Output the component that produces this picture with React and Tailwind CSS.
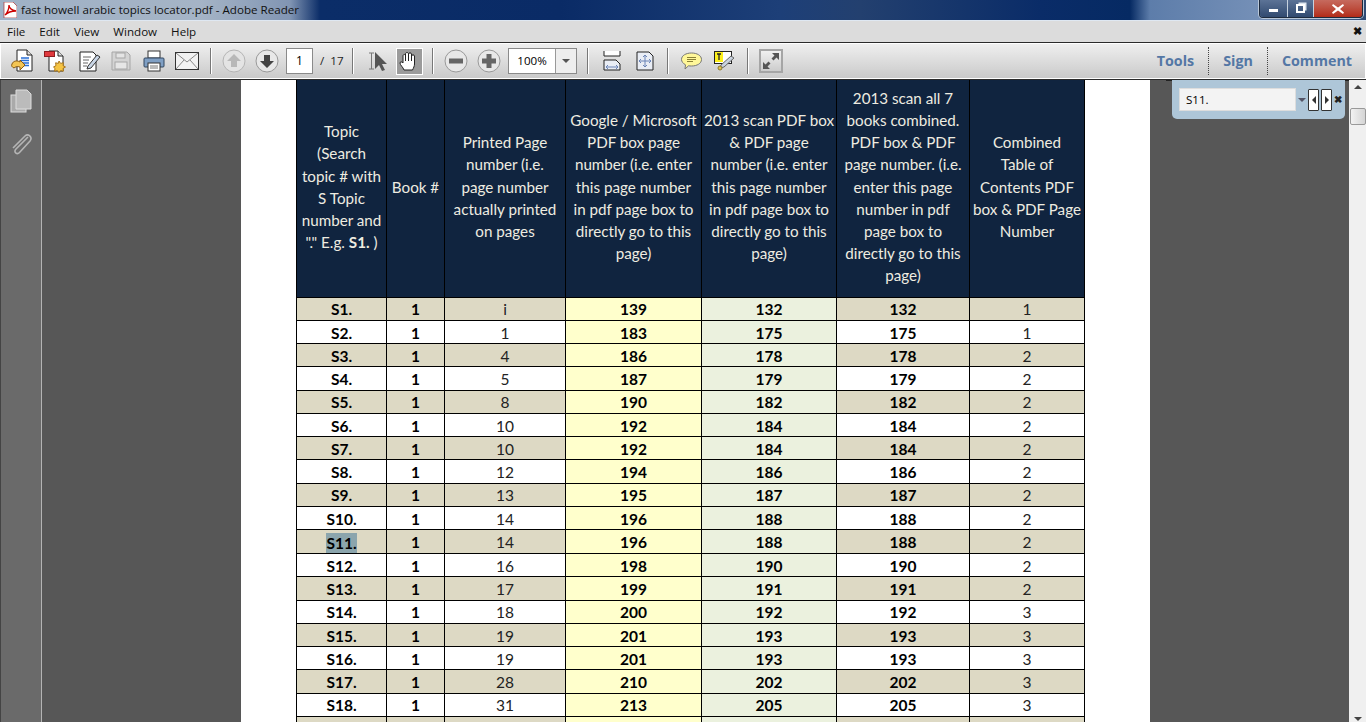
import React from 'react'

// Table content
const rows = [
  ['S1.', '1', 'i', '139', '132', '132', '1'],
  ['S2.', '1', '1', '183', '175', '175', '1'],
  ['S3.', '1', '4', '186', '178', '178', '2'],
  ['S4.', '1', '5', '187', '179', '179', '2'],
  ['S5.', '1', '8', '190', '182', '182', '2'],
  ['S6.', '1', '10', '192', '184', '184', '2'],
  ['S7.', '1', '10', '192', '184', '184', '2'],
  ['S8.', '1', '12', '194', '186', '186', '2'],
  ['S9.', '1', '13', '195', '187', '187', '2'],
  ['S10.', '1', '14', '196', '188', '188', '2'],
  ['S11.', '1', '14', '196', '188', '188', '2'],
  ['S12.', '1', '16', '198', '190', '190', '2'],
  ['S13.', '1', '17', '199', '191', '191', '2'],
  ['S14.', '1', '18', '200', '192', '192', '3'],
  ['S15.', '1', '19', '201', '193', '193', '3'],
  ['S16.', '1', '19', '201', '193', '193', '3'],
  ['S17.', '1', '28', '210', '202', '202', '3'],
  ['S18.', '1', '31', '213', '205', '205', '3'],
  ['', '', '', '', '', '', ''],
]

const headers = [
  <>Topic<br />(Search<br />topic # with<br />S Topic<br />number and<br />"." E.g. <b>S1.</b> )</>,
  <>Book #</>,
  <>Printed Page<br />number (i.e.<br />page number<br />actually printed<br />on pages</>,
  <>Google / Microsoft<br />PDF box page<br />number (i.e. enter<br />this page number<br />in pdf page box to<br />directly go to this<br />page)</>,
  <>2013 scan PDF box<br />&amp; PDF page<br />number (i.e. enter<br />this page number<br />in pdf page box to<br />directly go to this<br />page)</>,
  <>2013 scan all 7<br />books combined.<br />PDF box &amp; PDF<br />page number. (i.e.<br />enter this page<br />number in pdf<br />page box to<br />directly go to this<br />page)</>,
  <>Combined<br />Table of<br />Contents PDF<br />box &amp; PDF Page<br />Number</>,
]

const widths = ['w-[90px]', 'w-[58px]', 'w-[121px]', 'w-[136px]', 'w-[135px]', 'w-[133px]', 'w-[115px]']

function Sep() {
  return <div className="w-[1px] h-[26px] bg-[#777] border-r border-white box-content" />
}

function Toolbar() {
  return (
    <div className="h-[38px] flex items-center border-y border-[#2b2b2b] bg-gradient-to-b from-[#f0f0f0] to-[#c9c9c9] shadow-[inset_0_0_0_1px_#fff] text-black">
      <div className="flex items-center ml-[11px] gap-[11px]">
        {/* create pdf */}
        <svg width="22" height="24" viewBox="0 0 22 24">
          <path d="M6 1h10l5 5v16H6z" fill="#fff" stroke="#222" />
          <path d="M16 1v5h5" fill="#ddd" stroke="#222" />
          <path d="M10 9h8M10 11.5h8M10 14h8M12 16.5h6" stroke="#2a6fd6" strokeWidth="1.3" />
          <path d="M1 15c1-3 5-4 8-2v-2l5 5-5 5v-3c-3-1-5 0-6 1-2-1-3-2-2-4z" fill="#f3c553" stroke="#8a5a12" />
        </svg>
        <svg width="22" height="24" viewBox="0 0 22 24">
          <path d="M5 2h9l5 5v15H5z" fill="#fff" stroke="#222" />
          <path d="M14 2v5h5" fill="#ddd" stroke="#222" />
          <rect x="0.5" y="2.5" width="10" height="5" fill="#e0393e" stroke="#8d1d20" />
          <path d="M15 12l1.600 2.400 2.800-.6-.4 2.800 2.500 1.400-2.500 1.400.4 2.800-2.800-.6-1.600 2-1.600-2-2.800.6.4-2.800L9.500 18l2.500-1.400-.4-2.800 2.800.6z" fill="#f5c443" stroke="#a9761c" />
        </svg>
        <svg width="22" height="22" viewBox="0 0 22 22" className="ml-[2px]">
          <path d="M1 2h13l3 3v16H1z" fill="#fff" stroke="#222" />
          <path d="M4 7h8M4 10h6M4 13h5M4 16h4" stroke="#666" />
          <path d="M9 16l9-11 3 2-9 11-4 1z" fill="#c9d6e6" stroke="#333" />
        </svg>
        <svg width="20" height="20" viewBox="0 0 20 20" className="-ml-[1px]">
          <path d="M1 1h15l3 3v15H1z" fill="#d4d4d4" stroke="#a6a6a6" />
          <rect x="5" y="2" width="9" height="5" fill="#e4e4e4" stroke="#a6a6a6" />
          <rect x="4" y="11" width="12" height="7" fill="#e6e6e6" stroke="#a6a6a6" />
        </svg>
        <svg width="22" height="22" viewBox="0 0 22 22" className="ml-[1px]">
          <rect x="5" y="1" width="12" height="7" fill="#fff" stroke="#333" />
          <path d="M2 8h18a1 1 0 0 1 1 1v7a1 1 0 0 1-1 1H2a1 1 0 0 1-1-1V9a1 1 0 0 1 1-1z" fill="#7f9fc4" stroke="#32465f" />
          <rect x="5" y="13" width="12" height="8" fill="#fff" stroke="#333" />
          <path d="M7 16h8M7 18h8" stroke="#777" />
        </svg>
        <svg width="24" height="18" viewBox="0 0 24 18" className="-ml-[1px]">
          <rect x="0.500" y="0.500" width="23" height="17" fill="#f2f2f2" stroke="#333" />
          <path d="M1 1l11 9 11-9M1 17l8-9M23 17l-8-9" fill="none" stroke="#888" />
        </svg>
      </div>
      <div className="ml-[11px]"><Sep /></div>
      <svg width="24" height="24" viewBox="0 0 24 24" className="ml-[10px]">
        <circle cx="12" cy="12" r="11" fill="#e4e4e4" stroke="#b5b5b5" />
        <path d="M12 5l7 7h-4v6H9v-6H5z" fill="#b8b8b8" />
      </svg>
      <svg width="24" height="24" viewBox="0 0 24 24" className="ml-[9px]">
        <circle cx="12" cy="12" r="11" fill="#e8e8e8" stroke="#999" />
        <path d="M12 19l-7-7h4V6h6v6h4z" fill="#444" />
      </svg>
      <div className="ml-[7px] w-[27px] h-[26px] bg-white border border-[#8a8a8a] flex items-center justify-center text-[12px]">1</div>
      <div className="ml-[7px] w-[24px] text-[11.600px] whitespace-nowrap text-[#222]">/&nbsp; 17</div>
      <div className="ml-[8px]"><Sep /></div>
      <svg width="20" height="20" viewBox="0 0 20 20" className="ml-[14px]">
        <path d="M1 2h5M1 18h5M3.500 2v16" stroke="#777" fill="none" />
        <path d="M7 1l12 12h-5l3 6-3 1-3-6-4 4z" fill="#555" />
      </svg>
      <div className="ml-[8px] w-[27px] h-[27px] bg-[#9b9b9b] border border-white flex items-center justify-center">
        <svg width="21" height="21" viewBox="0 0 21 21">
          <path d="M5 19c-1-3-4-5-4-7 0-1.500 2-1.500 3 0V5c0-2 2.500-2 2.500 0V3c0-2 3-2 3 0v0c0-1.500 3-1.500 3 0v2c0-1.500 3-1.500 3 0v8c0 2-1 4-2 6z" fill="#fff" stroke="#222" />
          <path d="M6.500 5v5M9.500 3v7M12.500 4v6" stroke="#222" />
        </svg>
      </div>
      <div className="ml-[9px]"><Sep /></div>
      <svg width="24" height="24" viewBox="0 0 24 24" className="ml-[10px]">
        <circle cx="12" cy="12" r="11" fill="#e8e8e8" stroke="#999" />
        <rect x="5" y="9.500" width="14" height="5" fill="#666" />
      </svg>
      <svg width="24" height="24" viewBox="0 0 24 24" className="ml-[9px]">
        <circle cx="12" cy="12" r="11" fill="#e8e8e8" stroke="#999" />
        <path d="M9.500 5h5v4.500H19v5h-4.500V19h-5v-4.500H5v-5h4.500z" fill="#666" />
      </svg>
      <div className="ml-[7px] w-[69px] h-[26px] bg-white border border-[#8a8a8a] flex">
        <div className="w-[46px] flex items-center justify-center text-[11.600px]">100%</div>
        <div className="flex-1 border-l border-[#999] bg-[#eee] flex items-center justify-center">
          <div className="w-0 h-0 border-x-[4px] border-x-transparent border-t-[4px] border-t-[#555]" />
        </div>
      </div>
      <div className="ml-[10px]"><Sep /></div>
      <svg width="18" height="20" viewBox="0 0 18 20" className="ml-[14px]">
        <path d="M1 0v5h16V0" fill="#fff" stroke="#222" />
        <path d="M1 19V9h12l4 4v6z" fill="#e9edf5" stroke="#222" />
        <path d="M3 16h12M3 16l2-2M3 16l2 2M15 16l-2-2M15 16l-2 2" stroke="#6a84b8" fill="none" />
      </svg>
      <svg width="18" height="20" viewBox="0 0 18 20" className="ml-[15px]">
        <path d="M1 1h12l4 4v14H1z" fill="#e9edf5" stroke="#222" />
        <path d="M3 10h12M9 4v12M3 10l2-2M3 10l2 2M15 10l-2-2M15 10l-2 2M9 4l-2 2M9 4l2 2M9 16l-2-2M9 16l2-2" stroke="#6a84b8" fill="none" />
      </svg>
      <div className="ml-[13px]"><Sep /></div>
      <svg width="21" height="18" viewBox="0 0 21 18" className="ml-[12px]">
        <path d="M10.500 1c5.500 0 10 2.500 10 6.500S16 14 10.500 14c-1 0-2 0-3-.2L4 17l.5-4.200C2 11.500.5 9.500.5 7.500.5 3.500 5 1 10.500 1z" fill="#fff799" stroke="#777" />
        <path d="M6 5.500h9M6 7.500h9M6 9.500h6" stroke="#8a8138" />
      </svg>
      <svg width="21" height="20" viewBox="0 0 21 20" className="ml-[12px]">
        <rect x="0.500" y="0.500" width="17" height="12" fill="#fff" stroke="#222" />
        <rect x="1" y="1" width="8" height="10" fill="#fdf01c" />
        <path d="M3 3h4M5 3v6" stroke="#222" strokeWidth="1.300" />
        <path d="M6 17l1-3 10-9 3 2-10 9z" fill="#c9d3df" stroke="#666" />
        <circle cx="6" cy="17" r="2" fill="#e0c050" stroke="#8a7a30" />
      </svg>
      <div className="ml-[12px]"><Sep /></div>
      <div className="ml-[10px] w-[24px] h-[24px] border-2 border-[#a5a5a5] bg-gradient-to-b from-[#f0f0f0] to-[#ccc] flex items-center justify-center">
        <svg width="18" height="18" viewBox="0 0 18 18">
          <path d="M10 1h7v7l-2.500-2.500-3 3-2-2 3-3zM8 17H1v-7l2.500 2.500 3-3 2 2-3 3z" fill="#555" />
        </svg>
      </div>
      {/* right side panels */}
      <div className="ml-auto flex items-center h-full text-[14.300px] font-bold text-[#5477a5]">
        <span>Tools</span>
        <div className="h-[28px] ml-[14px] mr-[14px] border-l border-dotted border-[#444]" />
        <span>Sign</span>
        <div className="h-[28px] ml-[14px] mr-[14px] border-l border-dotted border-[#444]" />
        <span className="mr-[14px]">Comment</span>
      </div>
    </div>
  )
}

function App() {
  return (
    <div className="w-[1366px] h-[722px] overflow-hidden flex flex-col bg-[#dcdcdc] font-['Open_Sans',sans-serif]">
      {/* window title bar */}
      <div className="h-[21px] flex items-start justify-between border-b border-[#dfe8f2] bg-[linear-gradient(90deg,#9fb1c6_0px,#a5b4c6_200px,#8195b3_290px,#0b2d68_320px,#0a2b66_560px,#1d3f78_780px,#23406f_860px,#0a2c68_1040px,#062a63_1130px,#5d7daa_1150px,#7590b7_1260px,#2f4a73_1366px)]">
        <div className="flex items-center h-[20px] pl-[3px]">
          <svg width="14" height="16" viewBox="0 0 14 16">
            <path d="M1 0h9l4 4v12H1z" fill="#fff" stroke="#a33" strokeWidth="0.700" />
            <path d="M2 13c3-3 4-7 4-10 0 3 2 5 7 6-4 0-8 1-11 4z" fill="none" stroke="#c00" strokeWidth="1.300" />
          </svg>
          <span className="ml-[4px] text-[11.600px] text-[#111] whitespace-nowrap">fast howell arabic topics locator.pdf - Adobe Reader</span>
        </div>
        {/* window buttons */}
        <div className="mr-[3px] flex h-[18px] border border-t-0 border-[#1d2a3d] rounded-b-[4px] shadow-[0_0_0_1px_#b9c7d8] overflow-hidden">
          <div className="w-[28px] flex items-center justify-center bg-gradient-to-b from-[#5c7396] to-[#314a70] border-r border-[#c7d2df]">
            <div className="w-[9px] h-[3px] mt-[4px] bg-white" />
          </div>
          <div className="w-[26px] flex items-center justify-center bg-gradient-to-b from-[#5c7396] to-[#314a70] border-r border-[#c7d2df]">
            <div className="w-[9px] h-[9px] border-2 border-white shadow-[2px_-2px_0_-0.500px_#dfe7f0]" />
          </div>
          <div className="w-[48px] flex items-center justify-center bg-gradient-to-b from-[#c66a5e] to-[#b22a17]">
            <svg width="12" height="10" viewBox="0 0 12 10">
              <path d="M1 0l5 3.500L11 0l1 1.500L8 5l4 3.500L11 10 6 6.500 1 10 0 8.500 4 5 0 1.500z" fill="#fff" />
            </svg>
          </div>
        </div>
      </div>
      {/* menu */}
      <div className="h-[21px] flex items-center pl-[7px] pr-[4px] gap-[14px] bg-[#dcdcdc] text-[11.600px] text-[#111]">
        <span>File</span>
        <span>Edit</span>
        <span>View</span>
        <span>Window</span>
        <span>Help</span>
        <span className="ml-auto text-[11px] font-bold">✖</span>
      </div>
      <Toolbar />
      {/* document area */}
      <div className="relative flex-1 flex min-h-0 overflow-hidden">
        <div className="w-[42px] shrink-0 bg-[#6a6a6a] border-r border-[#b4b4b4] border-l border-l-[#444] flex flex-col items-center pt-[9px]">
          <svg width="22" height="24" viewBox="0 0 22 24">
            <rect x="1" y="6" width="15" height="17" fill="#aaa" stroke="#ddd" />
            <path d="M6 1h11l4 4v15H6z" fill="#bbb" stroke="#ddd" />
          </svg>
          <svg width="22" height="24" viewBox="0 0 22 24" className="mt-[19px]" fill="none" stroke="#b5b5b5" strokeWidth="1.600">
            <path d="M18 5L6 17c-3 3 1 6 3.500 3.500L20 9c3-4-2-8-5-5L3 16" />
          </svg>
        </div>
        <div className="flex-1 min-w-0 bg-[#575757] flex justify-start pl-[199px]">
          <div className="w-[909px] h-full bg-white pl-[55px] overflow-hidden">
            <table className="w-[788px] table-fixed border-collapse font-['Lato',sans-serif] text-[15.500px]">
              <thead>
                <tr className="h-[217px] bg-[#10243f] text-[#eeece1] leading-[22.200px] text-[15.200px]">
                  {headers.map((h, i) => (
                    <th key={i} className={`${widths[i]} font-normal whitespace-nowrap border-x border-b border-black p-0 pb-[3px]`}>{h}</th>
                  ))}
                </tr>
              </thead>
              <tbody>
                {rows.map((row, r) => {
                  const base = r % 2 === 0 ? 'bg-[#ddd9c4]' : 'bg-white'
                  return (
                    <tr key={r} className="h-[23.250px] leading-none">
                      {row.map((cell, c) => {
                        let bg = base
                        if (c === 3) bg = 'bg-[#ffffcc]'
                        if (c === 4) bg = 'bg-[#ebf1de]'
                        const bold = c !== 2 && c !== 6
                        return (
                          <td key={c} className={`${bg} ${bold ? 'font-bold text-black' : 'text-[#222]'} text-center border border-black p-0 pt-[3px]`}>
                            {r === 10 && c === 0 ? <span className="bg-[#8ba5ad] inline-block leading-[20px]">{cell}</span> : cell}
                          </td>
                        )
                      })}
                    </tr>
                  )
                })}
              </tbody>
            </table>
          </div>
        </div>
        {/* scrollbar */}
        <div className="w-[17px] shrink-0 bg-[#f0f0f0] flex flex-col items-center pt-[5px] relative">
          <div className="w-0 h-0 border-x-[4px] border-x-transparent border-b-[4px] border-b-[#444]" />
          <div className="mt-[19px] w-[16px] h-[17px] bg-gradient-to-r from-[#f2f2f2] to-[#d5d5d5] border border-[#999] rounded-[2px]" />
          <div className="mt-auto mb-[1px] w-0 h-0 border-x-[4px] border-x-transparent border-t-[4px] border-t-[#444]" />
        </div>
        {/* find box */}
        <div className="absolute top-0 left-[1166px] w-[183px] h-[1px] bg-[#222]" />
        <div className="absolute top-0 left-[1172px] w-[173px] h-[39px] bg-[#aec6d8] rounded-b-[5px] flex items-center pl-[7px]">
          <div className="w-[117px] h-[23px] bg-[#f3f3f3] border border-[#ddd] flex items-center pl-[6px] text-[11.600px] text-black">S11.</div>
          <div className="ml-[2px] w-0 h-0 border-x-[4px] border-x-transparent border-t-[4px] border-t-[#556]" />
          <div className="ml-[2px] w-[11px] h-[22px] bg-white border border-[#333] rounded-[1px] flex items-center justify-center">
            <div className="w-0 h-0 border-y-[4px] border-y-transparent border-r-[4px] border-r-[#333]" />
          </div>
          <div className="ml-[2px] w-[11px] h-[22px] bg-white border border-[#333] rounded-[1px] flex items-center justify-center">
            <div className="w-0 h-0 border-y-[4px] border-y-transparent border-l-[4px] border-l-[#333]" />
          </div>
          <span className="ml-[2px] text-[10px] font-bold text-[#222]">✖</span>
        </div>
      </div>
    </div>
  )
}

export default App
